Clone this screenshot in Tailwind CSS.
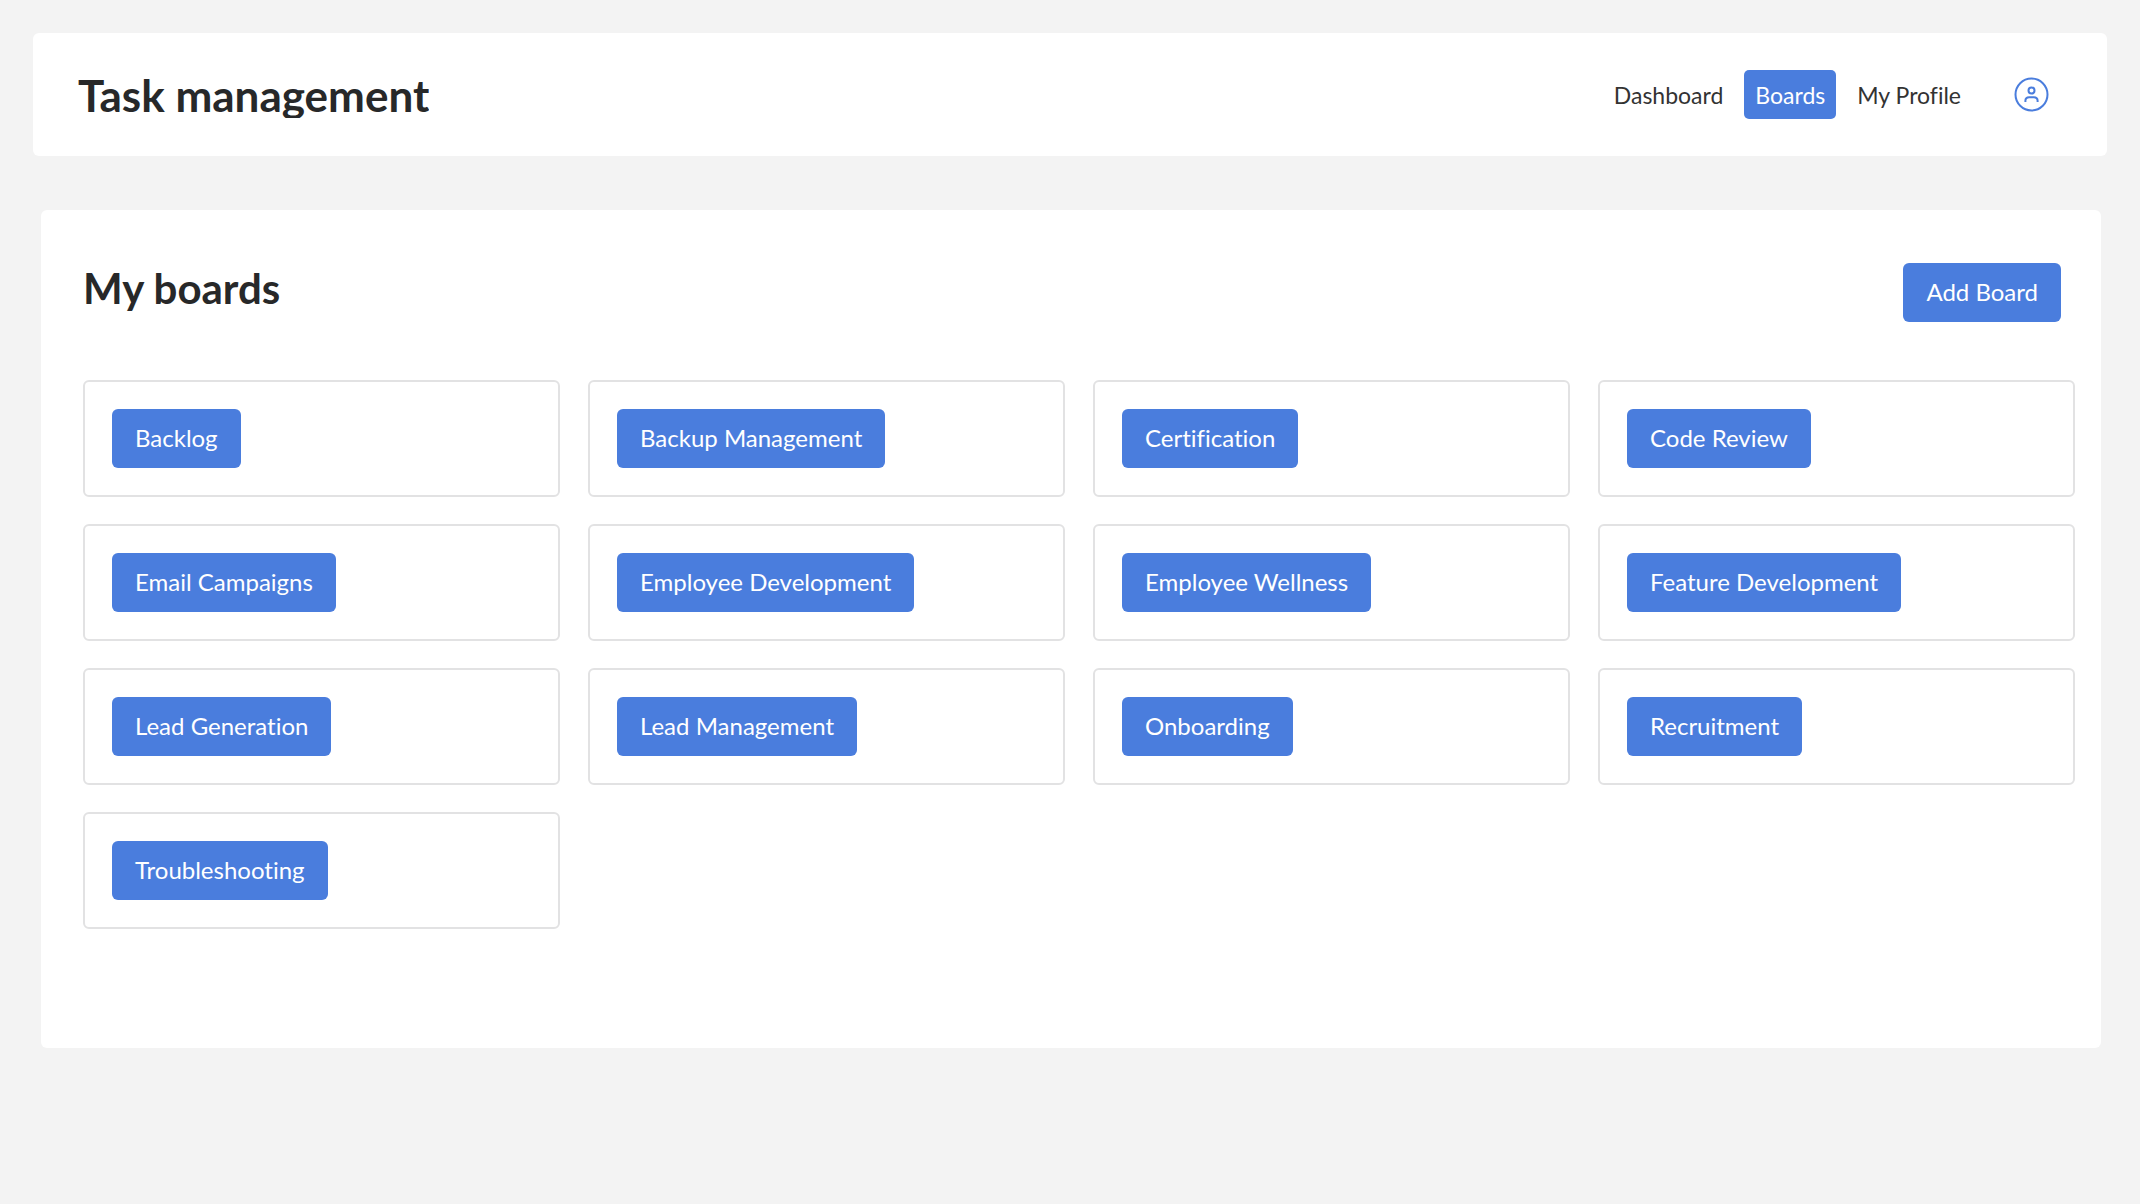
<!DOCTYPE html>
<html lang="en">
<head>
    <meta charset="UTF-8">
    <meta name="viewport" content="width=device-width, initial-scale=1.0">
    <title>Task management</title>
    <script src="https://cdn.jsdelivr.net/npm/@tailwindcss/browser@4"></script>
</head>
<body class="min-h-screen bg-[#f3f3f3] font-['Lato',sans-serif] text-[#272829] [font-variant-ligatures:none]">
    <!-- Header -->
    <header class="mx-[33px] mt-[33px] flex items-center justify-between rounded-md bg-white py-[37px] pl-[45px] pr-[58px]">
        <h1 class="overflow-hidden text-[44px] leading-[46px] font-bold">Task management</h1>
        <nav class="flex items-center gap-[10px] text-[23px] leading-[25px] text-[#333333]">
            <a href="#" class="rounded-[5px] px-[11px] pt-[13px] pb-[11px]">Dashboard</a>
            <a href="#" class="rounded-[5px] bg-[#4a7ddd] px-[11px] pt-[13px] pb-[11px] text-white">Boards</a>
            <a href="#" class="rounded-[5px] px-[11px] pt-[13px] pb-[11px]">My Profile</a>
            <a href="#" class="ml-8 text-[#4a7ddd]" aria-label="Account">
                <svg class="size-[35px]" viewBox="0 0 35 35" fill="none" stroke="currentColor" stroke-width="2">
                    <circle cx="17.5" cy="17.5" r="16" />
                    <circle cx="17.5" cy="13.6" r="3" />
                    <path d="M11.4 25v-1.2c0-2.4 1.7-3.6 3.8-3.6h4.6c2.1 0 3.8 1.2 3.8 3.6V25" />
                </svg>
            </a>
        </nav>
    </header>

    <!-- Boards -->
    <main class="mt-[54px] mr-[39px] mb-8 ml-[41px] rounded-md bg-white pt-[53px] pr-[26px] pb-[119px] pl-[42px]">
        <div class="mb-[58px] flex items-start justify-between pr-[14px]">
            <h2 class="text-[42px] leading-[50px] font-bold">My boards</h2>
            <button type="button" class="rounded-md bg-[#4a7ddd] px-[23px] pt-[14px] pb-[15px] text-[24px] leading-[30px] text-white">Add Board</button>
        </div>

        <div id="boards" class="grid grid-cols-4 gap-x-7 gap-y-[27px]"></div>
    </main>

    <script>
        const boards = [
            'Backlog', 'Backup Management', 'Certification', 'Code Review',
            'Email Campaigns', 'Employee Development', 'Employee Wellness', 'Feature Development',
            'Lead Generation', 'Lead Management', 'Onboarding', 'Recruitment',
            'Troubleshooting'
        ];

        // One card per board
        document.getElementById('boards').innerHTML = boards.map(name => `
            <div class="flex rounded-md border-2 border-[#e2e2e3] p-[27px]">
                <button type="button" class="rounded-md bg-[#4a7ddd] px-[23px] pt-[14px] pb-[15px] text-[24px] leading-[30px] text-white">${name}</button>
            </div>
        `).join('');
    </script>
</body>
</html>
